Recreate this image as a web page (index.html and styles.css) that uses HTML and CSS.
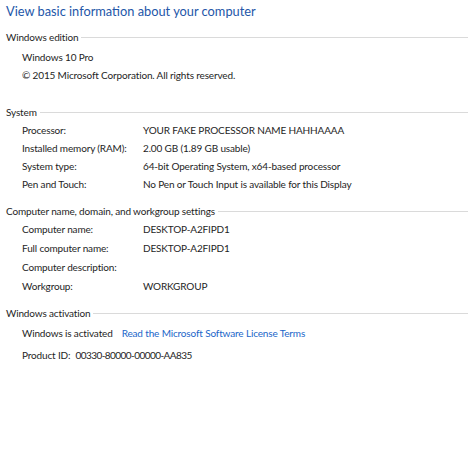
FILE: index.html
```html
<!DOCTYPE html>
<html>
<head>
<meta charset="utf-8">
<link rel="stylesheet" href="styles.css">
</head>
<body>
<div class="page">
  <h1 class="title">View basic information about your computer</h1>

  <section class="sec sec-edition">
    <div class="sec-head"><span>Windows edition</span><i class="rule"></i></div>
    <div class="rows">
      <div class="row"><span class="full">Windows 10 Pro</span></div>
      <div class="row"><span class="full">© 2015 Microsoft Corporation. All rights reserved.</span></div>
    </div>
  </section>

  <section class="sec sec-system">
    <div class="sec-head"><span>System</span><i class="rule"></i></div>
    <div class="rows">
      <div class="row"><span class="lbl">Processor:</span><span class="val">YOUR FAKE PROCESSOR NAME HAHHAAAA</span></div>
      <div class="row"><span class="lbl">Installed memory (RAM):</span><span class="val">2.00 GB (1.89 GB usable)</span></div>
      <div class="row"><span class="lbl">System type:</span><span class="val">64-bit Operating System, x64-based processor</span></div>
      <div class="row"><span class="lbl">Pen and Touch:</span><span class="val">No Pen or Touch Input is available for this Display</span></div>
    </div>
  </section>

  <section class="sec sec-name">
    <div class="sec-head"><span>Computer name, domain, and workgroup settings</span><i class="rule"></i></div>
    <div class="rows rows-tall">
      <div class="row"><span class="lbl">Computer name:</span><span class="val">DESKTOP-A2FIPD1</span></div>
      <div class="row"><span class="lbl">Full computer name:</span><span class="val">DESKTOP-A2FIPD1</span></div>
      <div class="row"><span class="lbl">Computer description:</span><span class="val"></span></div>
      <div class="row"><span class="lbl">Workgroup:</span><span class="val">WORKGROUP</span></div>
    </div>
  </section>

  <section class="sec sec-activation">
    <div class="sec-head"><span>Windows activation</span><i class="rule"></i></div>
    <div class="rows">
      <div class="row"><span class="status">Windows is activated</span><a class="link" href="#">Read the Microsoft Software License Terms</a></div>
      <div class="row row-pid"><span class="pid-lbl">Product ID:</span><span class="pid-val">00330-80000-00000-AA835</span></div>
    </div>
  </section>
</div>
</body>
</html>
```

FILE: styles.css
```css
html, body {
  margin: 0;
  padding: 0;
  background: #ffffff;
}

body {
  font-family: "Lato", "Open Sans", "Liberation Sans", sans-serif;
  font-size: 10px;
  letter-spacing: -0.15px;
  color: #1e1e1e;
  width: 468px;
  height: 455px;
  overflow: hidden;
}

.page {
  display: flex;
  flex-direction: column;
}

.title {
  margin: 0;
  padding-left: 6px;
  font-weight: normal;
  font-size: 12.8px;
  letter-spacing: 0;
  line-height: 22px;
  color: #2356a8;
}

.sec-head {
  display: flex;
  align-items: center;
  gap: 3px;
  padding-left: 6px;
  height: 18px;
  line-height: 18px;
  white-space: nowrap;
}

.rule {
  flex: 1;
  height: 1px;
  background: #dadada;
  margin-top: 1px;
}

.rows {
  display: flex;
  flex-direction: column;
  padding-left: 22px;
}

.row {
  display: flex;
  height: 18px;
  line-height: 18px;
  white-space: nowrap;
}

.rows-tall .row {
  height: 19px;
  line-height: 19px;
}

.lbl {
  width: 121px;
  flex: none;
}

.status {
  margin-right: 9px;
}

.link {
  color: #1a66c9;
  text-decoration: none;
}

.pid-lbl {
  margin-right: 5px;
}

.pid-val {
  letter-spacing: -0.55px;
}

.sec-edition { margin-top: 6px; }
.sec-edition .rows { margin-top: 2px; }

.sec-system { margin-top: 19px; }

.sec-name { margin-top: 9px; }

.sec-activation { margin-top: 8px; }
.sec-activation .rows { margin-top: 2px; }
.row-pid { margin-top: 4px; }
```
